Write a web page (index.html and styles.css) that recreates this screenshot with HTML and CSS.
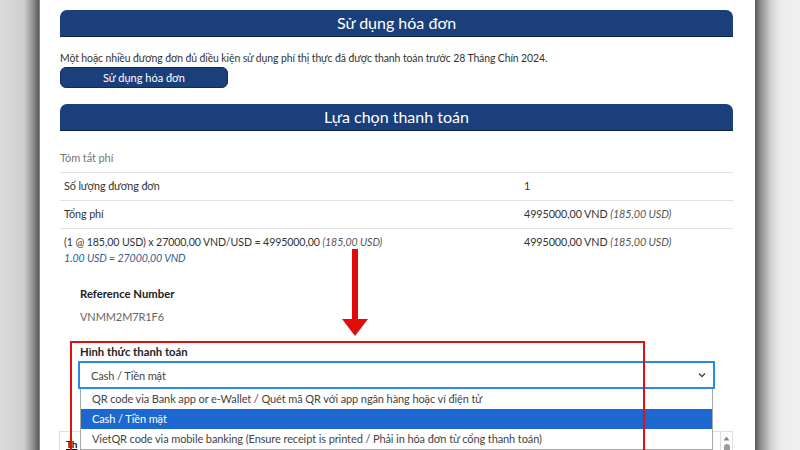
FILE: index.html
```html
<!DOCTYPE html>
<html lang="vi">
<head>
<meta charset="utf-8">
<title>Lựa chọn thanh toán</title>
<link rel="stylesheet" href="styles.css">
</head>
<body>
<div class="screen">
  <div class="gutter-left"></div>
  <main class="page">
    <div class="section-head">Sử dụng hóa đơn</div>
    <p class="note">Một hoặc nhiều đương đơn đủ điều kiện sử dụng phí thị thực đã được thanh toán trước 28 Tháng Chín 2024.</p>
    <button class="btn" type="button">Sử dụng hóa đơn</button>
    <div class="section-head second">Lựa chọn thanh toán</div>
    <div class="caption">Tóm tắt phí</div>
    <table class="fees">
      <tr><td class="c1">Số lượng đương đơn</td><td>1</td></tr>
      <tr><td class="c1">Tổng phí</td><td>4995000,00 VND <i>(185,00 USD)</i></td></tr>
      <tr><td class="c1">(1 @ 185,00 USD) x 27000,00 VND/USD = 4995000,00 <i>(185,00 USD)</i><br><i class="rate">1.00 USD = 27000,00 VND</i></td><td>4995000,00 VND <i>(185,00 USD)</i></td></tr>
    </table>
    <div class="field">
      <div class="label">Reference Number</div>
      <div class="value">VNMM2M7R1F6</div>
    </div>
    <div class="field pay">
      <div class="label">Hình thức thanh toán</div>
      <div class="select">
        <span>Cash / Tiền mặt</span>
        <svg class="chev" width="8" height="6" viewBox="0 0 8 6"><polyline points="1,1.5 4,4.5 7,1.5" fill="none" stroke="#444" stroke-width="1.4"/></svg>
      </div>
      <ul class="dropdown">
        <li>QR code via Bank app or e-Wallet / Quét mã QR với app ngân hàng hoặc ví điện tử</li>
        <li class="active">Cash / Tiền mặt</li>
        <li>VietQR code via mobile banking (Ensure receipt is printed / Phải in hóa đơn từ cổng thanh toán)</li>
      </ul>
    </div>
    <div class="below">
      <b class="th">Th</b>
      <div class="scroll">
        <svg width="7" height="5" viewBox="0 0 7 5"><polygon points="3.5,0.5 6.5,4.5 0.5,4.5" fill="#888"/></svg>
        <span class="thumb"></span>
      </div>
    </div>
    <div class="redbox"></div>
    <div class="arrow"><span class="shaft"></span><span class="head"></span></div>
  </main>
  <div class="gutter-right"></div>
</div>
</body>
</html>
```
FILE: styles.css
```css
* { box-sizing: border-box; }
html, body { margin: 0; padding: 0; }
body {
  width: 800px;
  height: 450px;
  overflow: hidden;
  font-family: "Lato", "Open Sans", sans-serif;
  font-size: 10.5px;
  letter-spacing: -0.1px;
  color: #333;
  background: #e8e8e8;
}
.screen { display: flex; height: 450px; }
.gutter-left {
  width: 40px;
  flex: none;
  background: linear-gradient(to right, #dcdcdc 0, #cfcfcf 60%, #8a8a8a 85%, #5c5c5c 96%, #9a9a9a 100%);
}
.gutter-right {
  width: 45px;
  flex: none;
  background: linear-gradient(to right, #555 0, #8c8c8c 12%, #cfcfcf 35%, #ececec 55%, #f0f0f0 100%);
}
.page {
  position: relative;
  width: 715px;
  flex: none;
  background: #fff;
  padding: 10px 22px 0 20px;
  overflow: hidden;
}
.section-head {
  height: 27px;
  background: #1b3f7a;
  border-radius: 7px 7px 0 0;
  border-bottom: 1px solid #0b2249;
  color: #fff;
  font-size: 16px;
  letter-spacing: 0;
  line-height: 26px;
  text-align: center;
}
.section-head.second { margin-top: 16px; }
.note { margin: 13px 0 0; line-height: 16px; font-size: 10.45px; }
.btn {
  display: block;
  margin-top: 1px;
  width: 168px;
  height: 21px;
  padding: 0;
  border: 1px solid #0f2c5c;
  border-radius: 6px;
  background: #1b3f7a;
  color: #fff;
  font-family: inherit;
  font-size: 11px;
  letter-spacing: 0;
  line-height: 18px;
}
.caption { margin-top: 19px; line-height: 16px; color: #777; font-size: 11px; }
.fees {
  margin-top: 6px;
  width: 100%;
  border-collapse: collapse;
}
.fees td {
  border-top: 1px solid #e2e2e2;
  padding: 5px 4px 6px;
  line-height: 16px;
  vertical-align: top;
  font-size: 10.8px;
}
.fees td.c1 { width: 460px; }
.fees tr:last-child td.c1 { font-size: 10.6px; }
.fees i { color: #555; }
.fees i.rate { color: #2f5d8f; line-height: 15px; }
.field { margin: 14px 18px 0 20px; }
.field .label { font-weight: bold; color: #222; line-height: 16px; font-size: 11.3px; letter-spacing: 0; }
.field .value { margin-top: 7px; color: #666; line-height: 16px; font-size: 11px; }
.pay { margin: 19px 18px 0 18px; position: relative; }
.pay .label { margin-left: 2px; }
.select {
  margin-top: 1px;
  height: 28px;
  border: 2px solid #2d8ae2;
  display: flex;
  align-items: center;
  justify-content: space-between;
  padding: 0 7px 0 11px;
  color: #444;
  font-size: 11px;
}
.chev { display: block; }
.dropdown {
  position: absolute;
  left: 2px;
  right: 2px;
  top: 45px;
  margin: 0;
  padding: 0;
  list-style: none;
  background: #fff;
  border: 1px solid #a8a8a8;
  border-top: none;
  z-index: 2;
  color: #444;
  font-size: 11px;
}
.dropdown li {
  height: 20px;
  line-height: 20px;
  padding-left: 11px;
  white-space: nowrap;
  overflow: hidden;
}
.dropdown li.active { background: #1c68d0; color: #fff; }
.below {
  margin: 42px 0 0 -1px;
  height: 40px;
  border: 1px solid #e0e0e0;
  border-bottom: none;
  display: flex;
  justify-content: space-between;
}
.th { font-size: 10px; line-height: 10px; margin: 7px 0 0 6px; color: #111; text-decoration: underline; }
.scroll {
  width: 12px;
  border-left: 1px solid #ddd;
  display: flex;
  flex-direction: column;
  align-items: center;
  padding-top: 4px;
  gap: 3px;
}
.thumb { width: 6px; height: 20px; border-radius: 3px; background: #9c9c9c; }
.redbox {
  position: absolute;
  left: 30px;
  top: 341px;
  width: 575px;
  height: 140px;
  border: 2px solid #e01010;
  z-index: 3;
  pointer-events: none;
}
.arrow {
  position: absolute;
  left: 302px;
  top: 249px;
  width: 26px;
  display: flex;
  flex-direction: column;
  align-items: center;
  z-index: 3;
}
.shaft { width: 6px; height: 70px; background: #e00c0c; }
.head {
  width: 0;
  height: 0;
  border-left: 13px solid transparent;
  border-right: 13px solid transparent;
  border-top: 17px solid #e00c0c;
}
```
